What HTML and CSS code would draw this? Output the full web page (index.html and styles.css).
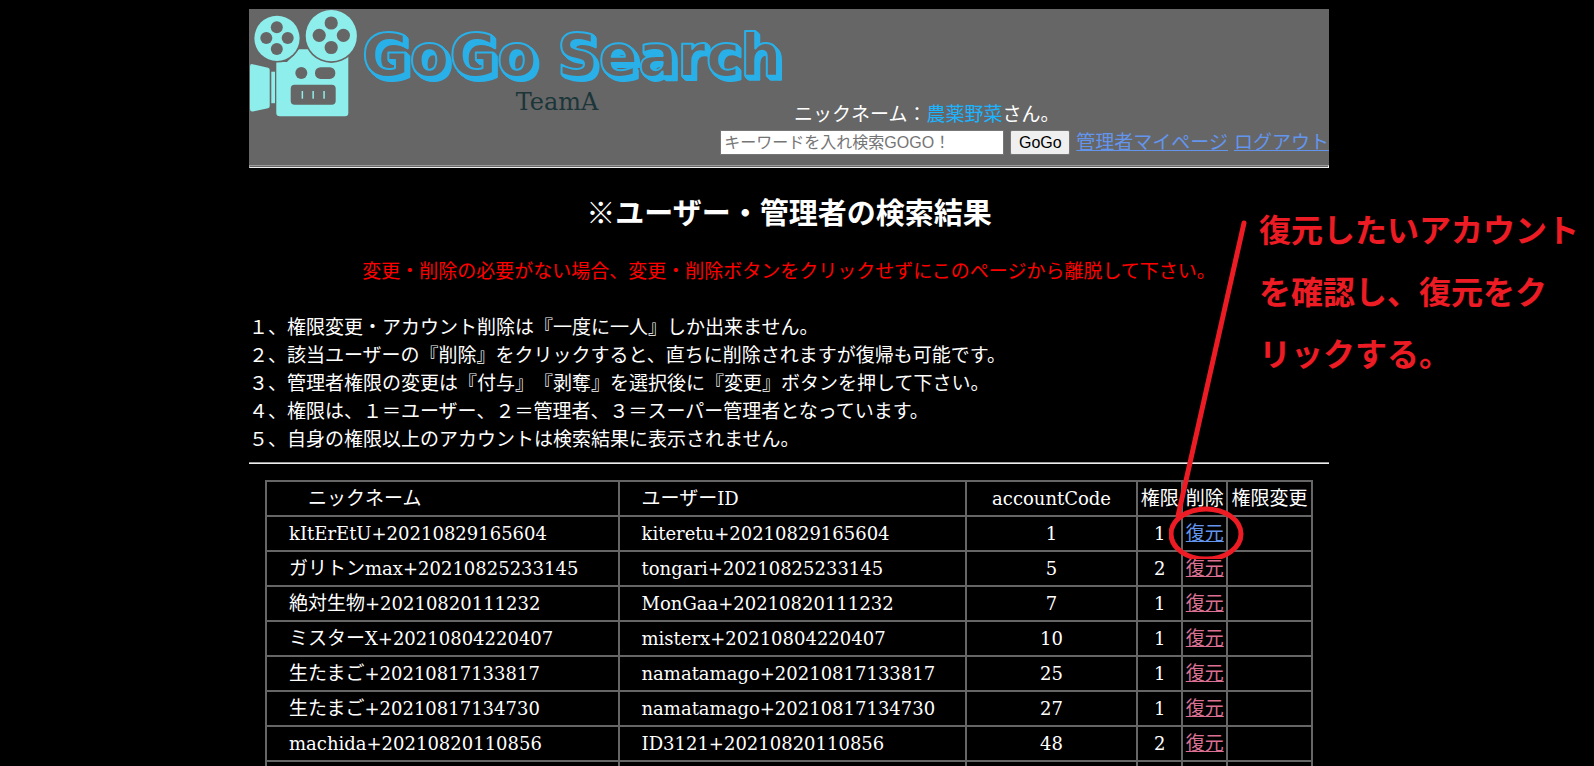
FILE: index.html
```html
<!DOCTYPE html>
<html lang="ja">
<head>
<meta charset="utf-8">
<title>GoGo Search</title>
<link rel="stylesheet" href="styles.css">
</head>
<body>
<div class="page">
  <header class="header">
    <div class="brand">
      <svg class="logo" viewBox="0 0 535 118" role="img" aria-label="GoGo Search TeamA">
        <g class="camera">
          <path d="M1 57.5Q1 54.7 3.5 55.2L19 58.7Q20.7 59.2 20.7 61V97Q20.7 98.8 19 99.3L4 102.5Q1 103 1 100Z"/>
          <rect x="22.3" y="62.7" width="3.7" height="31.5"/>
          <path d="M27.3 53H38L50 40.3H99.3V104Q99.3 107.3 96 107.3H31Q27.3 107.3 27.3 104Z"/>
        </g>
        <g class="cutout">
          <circle cx="28" cy="29.3" r="24.2"/>
          <circle cx="82.3" cy="26.7" r="27.2"/>
          <circle cx="52.3" cy="64" r="6"/>
          <rect x="66" y="58.2" width="20.3" height="11.8" rx="5.6"/>
          <rect x="41.7" y="75.7" width="45" height="20" rx="4"/>
        </g>
        <g class="camera">
          <circle cx="28" cy="29.3" r="22.6"/>
          <circle cx="82.3" cy="26.7" r="25.6"/>
          <rect x="52.6" y="82" width="1.5" height="7.7"/>
          <rect x="63.4" y="82" width="1.5" height="7.7"/>
          <rect x="74.3" y="82" width="1.5" height="7.7"/>
        </g>
        <g class="cutout">
          <circle cx="27.8" cy="18.3" r="6"/><circle cx="17.3" cy="29" r="6"/>
          <circle cx="38.7" cy="29" r="6"/><circle cx="27.8" cy="40" r="6"/>
          <circle cx="82.2" cy="14" r="6.6"/><circle cx="70.2" cy="26.3" r="6.6"/>
          <circle cx="94.4" cy="26.3" r="6.6"/><circle cx="82.2" cy="38.5" r="6.6"/>
        </g>
        <text class="logo-name" x="113" y="67">GoGo Search</text>
        <text class="logo-team" x="308" y="101">TeamA</text>
      </svg>
      <p class="greeting">ニックネーム：<span class="nickname">農薬野菜</span>さん。</p>
    </div>
    <form class="search">
      <input class="keyword" type="text" aria-label="キーワード" placeholder="キーワードを入れ検索GOGO！">
      <button class="go" type="button">GoGo</button>
      <a class="link" href="#">管理者マイページ</a>
      <a class="link" href="#">ログアウト</a>
    </form>
    <hr class="header-rule">
  </header>
  <main>
    <h2 class="title">※ユーザー・管理者の検索結果</h2>
    <p class="warning">変更・削除の必要がない場合、変更・削除ボタンをクリックせずにこのページから離脱して下さい。</p>
    <div class="notes">
      <p>１、権限変更・アカウント削除は『一度に一人』しか出来ません。</p>
      <p>２、該当ユーザーの『削除』をクリックすると、直ちに削除されますが復帰も可能です。</p>
      <p>３、管理者権限の変更は『付与』『剥奪』を選択後に『変更』ボタンを押して下さい。</p>
      <p>４、権限は、１＝ユーザー、２＝管理者、３＝スーパー管理者となっています。</p>
      <p>５、自身の権限以上のアカウントは検索結果に表示されません。</p>
    </div>
    <hr class="rule">
    <table class="accounts">
      <colgroup><col class="c-name"><col class="c-id"><col class="c-code"><col class="c-role"><col class="c-del"><col class="c-change"></colgroup>
      <thead>
        <tr><th class="text"><span class="ja">　ニックネーム</span></th><th class="text"><span class="ja">ユーザー</span>ID</th><th>accountCode</th><th><span class="ja">権限</span></th><th><span class="ja">削除</span></th><th><span class="ja">権限変更</span></th></tr>
      </thead>
      <tbody>
        <tr><td class="text">kItErEtU+20210829165604</td><td class="text">kiteretu+20210829165604</td><td>1</td><td>1</td><td><a class="link ja" href="#">復元</a></td><td></td></tr>
        <tr><td class="text"><span class="ja">ガリトン</span>max+20210825233145</td><td class="text">tongari+20210825233145</td><td>5</td><td>2</td><td><a class="link seen ja" href="#">復元</a></td><td></td></tr>
        <tr><td class="text"><span class="ja">絶対生物</span>+20210820111232</td><td class="text">MonGaa+20210820111232</td><td>7</td><td>1</td><td><a class="link seen ja" href="#">復元</a></td><td></td></tr>
        <tr><td class="text"><span class="ja">ミスター</span>X+20210804220407</td><td class="text">misterx+20210804220407</td><td>10</td><td>1</td><td><a class="link seen ja" href="#">復元</a></td><td></td></tr>
        <tr><td class="text"><span class="ja">生たまご</span>+20210817133817</td><td class="text">namatamago+20210817133817</td><td>25</td><td>1</td><td><a class="link seen ja" href="#">復元</a></td><td></td></tr>
        <tr><td class="text"><span class="ja">生たまご</span>+20210817134730</td><td class="text">namatamago+20210817134730</td><td>27</td><td>1</td><td><a class="link seen ja" href="#">復元</a></td><td></td></tr>
        <tr><td class="text">machida+20210820110856</td><td class="text">ID3121+20210820110856</td><td>48</td><td>2</td><td><a class="link seen ja" href="#">復元</a></td><td></td></tr>
        <tr><td></td><td></td><td></td><td></td><td></td><td></td></tr>
      </tbody>
    </table>
  </main>
  <svg class="pointer" viewBox="0 0 80 350" aria-hidden="true">
    <path d="M75 14L9 307"/>
    <ellipse cx="37" cy="325" rx="35" ry="25"/>
  </svg>
  <p class="callout">復元したいアカウント<br>を確認し、復元をク<br>リックする。</p>
</div>
</body>
</html>
```
FILE: styles.css
```css
* {
  box-sizing: border-box;
}

html,
body {
  height: 100%;
  margin: 0;
  overflow: hidden;
  background: #000;
}

body {
  padding: 9px 16px 0 0;
  color: #fff;
  font-family: "Noto Sans CJK JP", sans-serif;
  font-size: 19px;
  line-height: 28px;
  text-spacing-trim: space-all;
}

p {
  margin: 0;
}

.page {
  position: relative;
  max-width: 1080px;
  margin: 0 auto;
}

.header {
  background: #666;
}

.brand {
  display: flex;
  align-items: flex-end;
  gap: 10px;
}

.logo {
  display: block;
  width: 535px;
  height: 118px;
}

.camera {
  fill: #8eeeec;
}

.cutout {
  fill: #666;
}

.logo-name {
  font-family: "DejaVu Sans", sans-serif;
  font-size: 58px;
  font-weight: bold;
  fill: #666;
  stroke: #29b0e8;
  stroke-width: 2px;
  stroke-linejoin: round;
  filter: drop-shadow(1px 1px 0 #29b0e8) drop-shadow(1px 1px 0 #29b0e8) drop-shadow(1px 1px 0 #29b0e8) drop-shadow(1px 1px 0 #29b0e8);
}

.logo-team {
  font-family: "DejaVu Serif", serif;
  font-size: 24px;
  fill: #1c3539;
  text-anchor: middle;
}

.nickname {
  color: #1cb4ff;
}

.search {
  display: flex;
  justify-content: flex-end;
  align-items: flex-end;
  gap: 6px;
  height: 28px;
}

.keyword,
.go {
  height: 25px;
  border: 1px solid #767676;
  font-family: "Liberation Sans", "Noto Sans CJK JP", sans-serif;
  font-size: 16px;
}

.keyword {
  width: 284px;
  padding: 0 3px;
  background: #fff;
}

.keyword::placeholder {
  color: #757575;
}

.go {
  width: 60px;
  padding: 0;
  border-radius: 2px;
  background: #efefef;
  color: #000;
}

.link {
  color: #6495ed;
}

.seen {
  color: #db7093;
}

.header-rule {
  height: 3px;
  margin: 10px 0 0;
  border: 1px solid;
  border-color: #9a9a9a #eee #eee #9a9a9a;
}

.title {
  margin: 22px 0 24px;
  font-size: 29px;
  line-height: 42px;
  text-align: center;
}

.warning {
  margin-bottom: 28px;
  color: #f00;
  text-align: center;
}

.rule {
  height: 2px;
  margin: 10px 0 16px;
  border: 0;
  border-top: 1px solid #9a9a9a;
  border-bottom: 1px solid #eee;
}

.accounts {
  width: calc(100% - 32px);
  margin: 0 16px;
  border-collapse: collapse;
  table-layout: fixed;
  font-family: "DejaVu Serif", "Noto Sans CJK JP", serif;
  font-size: 18px;
}

.accounts th,
.accounts td {
  height: 35px;
  padding: 3px 0 2px;
  border: 2px solid #666;
  font-weight: normal;
  text-align: center;
  white-space: nowrap;
}

.accounts .text {
  padding-left: 22px;
  text-align: left;
}

.ja {
  font-family: "Noto Sans CJK JP", sans-serif;
  font-size: 19px;
  line-height: 1;
}

.c-name { width: 33.7%; }
.c-id { width: 33.2%; }
.c-code { width: 16.4%; }
.c-role,
.c-del { width: 4.3%; }
.c-change { width: 8.1%; }

/* Handwritten-style marker drawn over the table */
.pointer {
  position: absolute;
  top: 200px;
  left: 920px;
  width: 80px;
  height: 350px;
  fill: none;
  stroke: #ed1c24;
  stroke-width: 5;
  stroke-linecap: round;
  pointer-events: none;
}

.callout {
  position: absolute;
  top: 188px;
  left: 1010px;
  color: #ed1c24;
  font-size: 32px;
  font-weight: bold;
  line-height: 62px;
  white-space: nowrap;
}
```
